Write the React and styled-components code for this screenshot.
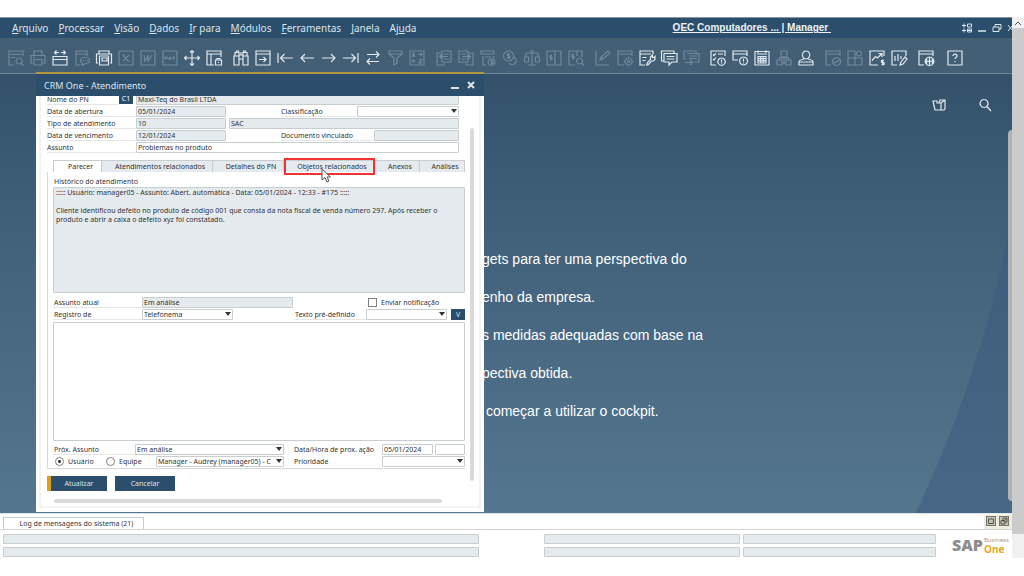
import React, { useState } from 'react';
import styled, { createGlobalStyle } from 'styled-components';

const MENUS = [
  ['', 'A', 'rquivo'],
  ['', 'P', 'rocessar'],
  ['', 'V', 'isão'],
  ['', 'D', 'ados'],
  ['', 'I', 'r para'],
  ['', 'M', 'ódulos'],
  ['', 'F', 'erramentas'],
  ['', 'J', 'anela'],
  ['Aj', 'u', 'da'],
];

const WIDGET_LINES = [
  'gets para ter uma perspectiva do',
  'enho da empresa.',
  's medidas adequadas com base na',
  'pectiva obtida.',
  '\u00a0começar a utilizar o cockpit.',
];

const HISTORY = `::::: Usuário: manager05 - Assunto: Abert. automática - Data: 05/01/2024 - 12:33 - #175 :::::

Cliente identificou defeito no produto de código 001 que consta da nota fiscal de venda número 297. Após receber o produto e abrir a caixa o defeito xyz foi constatado.`;

// 18 x 18 line drawings
const ICONS = {
  preview: 'M7 16H2V2h14v5M4 5.5h10M4 8.5h4M12 9a3 3 0 1 0 .1 0M14 14l2.5 2.5',
  print: 'M5 6V2h8v4M4 14H2V6.500h14V14h-2M5 10.500h8V16H5zM4 8.500h2',
  fax: 'M2 7.500h14V16H2zM2 10.500h14M4 3.500h4M10 3.500h4M5.500 1.500l-2 2 2 2M12.500 1.500l2 2-2 2',
  sms: 'M7 16H3V2h11v5M3 5h11M12 8.500c6 0 6 6 0 6l-3 2v-3c-3-2-1-5 3-5M10 11.500h1M12 11.500h1M14 11.500h1',
  copies: 'M4 5V2h10v3M3 14H1.500V5h15v9H15M4.500 16V7h9v9zM7 9h5v3H7z',
  excel: 'M2 2h14v14H2zM6 6l5 6M12 6l-6 6M5.500 6h2M11 12h2',
  word: 'M2 2h14v14H2zM5 6l1 6 3-5 0 5 4-6',
  pdf: 'M2 2h14v14H2zM4 10.500V8h2v1.500H4M8 8v2.500c2.500 0 2.500-2.500 0-2.500M12 10.500V8h2M12 9.300h1.500',
  move: 'M9 1.500v15M1.500 9h15M7 3.500l2-2 2 2M7 14.500l2 2 2-2M3.500 7l-2 2 2 2M14.500 7l2 2-2 2',
  layout: 'M9 16H2V2h14v6M2 5h14M6 5v11M10.500 11h6v5h-6zM12 11V9.500h3V11M13.500 13v1',
  find: 'M2 7h5v9H2zM11 7h5v9h-5zM3 7V3.500h4V7M11 7V3.500h4V7M7 6h4M7 10h4M4.500 3.500V2h2v1.500M11.500 3.500V2h2v1.500M9 6V3',
  goto: 'M2 2h14v14H2zM2 5h14M5 10.500h7M9.500 8l2.500 2.500L9.500 13',
  first: 'M2 4v10M17 9H4.500M8.500 5l-4 4 4 4',
  prev: 'M16 9H3M7 5L3 9l4 4',
  next: 'M2 9h13M11 5l4 4-4 4',
  last: 'M16 4v10M1 9h12.500M9.500 5l4 4-4 4',
  swap: 'M3 5.500h12M12 2.500l3 3-3 3M15 12.500H3M6 9.500l-3 3 3 3',
  filter: 'M3 2h13v3l-5 4v5l-3 2V9L3 5zM3 5h13',
  sort: 'M2 2h14v14H2zM4 8l1.500-4L7 8M4.500 7h2M10 5.500h4M12.500 4L14 5.500 12.500 7M8 12H4M5.500 10.500L4 12l1.500 1.500M11 10.500h3l-3 3.500h3',
  base: 'M6 4H2v12h7v-2M7 2h9v11H7zM9 5h5M9 10h5M13 7.500H4.500M6.500 5.500l-2 2 2 2',
  target: 'M12 4h4v12H9v-2M2 2h9v11H2zM4 5h5M4 10h5M5 7.500h8.500M11.500 5.500l2 2-2 2',
  profit: 'M7 16H4V7M2 2h13v3H2zM4 7v9M6 8h6M15 7v2M12.500 9.500a3.500 3.500 0 1 0 .1 0M14 11.500h-2v1.500h2v1.500h-2M13 10.500v5',
  coins: 'M7.500 2a5 5 0 1 0 .1 0M9 5H6.500v2H9v2H6M7.500 4v6M13 8a4 4 0 1 1-5 6',
  scale: 'M9 2v14M3 4h12M5 16h8M3 4v4M15 4v4M1.500 8h4v5h-4zM12.500 8h4v5h-4zM7 2h4',
  ledger: 'M2 2h14v14H2zM10 2v14M7 6.500H5v2h2v2H5M6 5.500v6',
  journal: 'M8 16H2V2h13v6M10 2v5M7 5.500H5v2h2v2H5M6 4.500v6M12.500 9a3 3 0 1 0 .1 0M14.500 14l2.500 2.500',
  edit: 'M2 2v14h13M6 11l1-3 7-6 2 2-7 6zM7 8l2 2',
  settings: 'M8 16H2V2h14v5M2 5h14M12.500 9a3.500 3.500 0 1 0 .1 0M12.500 11.500a1 1 0 1 0 .1 0M12.500 7.500V9M12.500 16v1.500M7.500 12.500H9M16 12.500h1.500',
  formset: 'M7 16H2V2h13v3M2 5h11M4.500 8.500h4M4.500 11.500h3M8.500 16l1-2.500 3-3V8l2-2v2.500h1.500l1-1v3l-1.500 1.500h-2L10 16z',
  chat: 'M4 12H1.500V2H14v2M4 4.500h13V13h-5l-3 3v-3H4zM6.500 7.500h8M6.500 10h8',
  reply: 'M4 10H2V2h12v2M5 4.500h12V13h-5M7 7h8M7 9.500h8M3 13.500h7M8 11l2.500 2.500L8 16',
  alert: 'M7 16H2V2h14v5M4 5.500l1 1 2-2.500M9 5h5M4 10l1 1 2-2.500M12.500 9a3.700 3.700 0 1 0 .1 0M12.500 10.500v3M12.500 14.500v.5',
  warning: 'M7 11H2V2h14v5M2 5h14M12.500 8a4 4 0 1 0 .1 0M12.500 9.500v3M12.500 13.500v1',
  calendar: 'M2 2.500h14V16H2zM4 5h10M5 1.500V4M13 1.500V4M5 7.500h8v6.500H5zM5 9.700h8M5 11.800h8M7.700 7.500V14M10.300 7.500V14',
  blocks: 'M6 2h6v6H6zM2 11h5v5H2zM11 11h5v5h-5zM4.500 11V9h9v2M9 8v6M7 14h4',
  user: 'M9 2a3.700 4 0 1 0 .1 0M7 9.500C7 11 2 10.500 2 12.500V16h14v-3.500c0-2-5-1.500-5-3M2 13h14',
  clock: 'M7 16H2V2h14v5M2 5h14M12.500 8.500a4 4 0 1 0 .1 0M10 14l5-3M12.500 12.500h2',
  widgets: 'M2 2h7v14H2zM2 9h14v7H9M13 2a2.500 2.500 0 1 0 .1 0',
  dashboard: 'M10 16H2V2h14v5M4 11.500l3.500-4 2 1.500 4-4M10.500 4.500H14V8M16 11.500h-2.500v2H16v2h-2.500M14.700 10.500v6',
  report: 'M7 16H2V2h14v5M5 7v5M8 5v7M11 7v3M10 16l1-3 4-5 2 2-4 5z',
  web: 'M7 16H2V2h14v5M2 5h14M12.500 8a4.300 4.300 0 1 0 .1 0M8.500 12.300h8M12.500 8v8.600M10 9.500c-1 2-1 4 0 6M15 9.500c1 2 1 4 0 6',
  help: 'M2 2h14v14H2zM7 7c0-2.500 4-2.500 4 0 0 1.500-2 1.500-2 3M9 12v1',
};

// a leading dash marks a disabled tool
const TOOLBAR = [
  ['-preview', '-print', 'fax', '-sms', 'copies', '-excel', '-word', '-pdf', 'move', 'layout'],
  ['find', 'goto', 'first', 'prev', 'next', 'last', 'swap', '-filter', '-sort'],
  ['-base', '-target', '-profit', '-coins', '-scale', '-ledger', '-journal'],
  ['-edit', '-settings', 'formset', 'chat', '-reply'],
  ['alert', 'warning', 'calendar', '-blocks', 'user'],
  ['-clock', '-widgets', 'dashboard', 'report'],
  ['web'],
  ['help'],
];

const TABS = [
  { name: 'Parecer', width: 49 },
  { name: 'Atendimentos relacionados', width: 111 },
  { name: 'Detalhes do PN', width: 71 },
  { name: 'Objetos relacionados', width: 91, marked: true },
  { name: 'Anexos', width: 45 },
  { name: 'Análises', width: 45 },
];

const Icon = ({ name }) => (
  <IconSvg viewBox="0 0 18 18" aria-hidden="true">
    <path d={ICONS[name]} />
  </IconSvg>
);

const Dropdown = ({ id, label, value = '', ...rest }) => (
  <SelectWrapper {...rest}>
    <Select id={id} aria-label={label} defaultValue={value}>
      <option value={value}>{value}</option>
    </Select>
    <svg viewBox="0 0 6 4" aria-hidden="true">
      <path d="M0 0h6L3 4z" />
    </svg>
  </SelectWrapper>
);

const MenuBar = () => (
  <MenuBarWrapper>
    <MenuList>
      {MENUS.map(([before, key, after]) => (
        <MenuButton key={key}>
          {before}
          <u>{key}</u>
          {after}
        </MenuButton>
      ))}
    </MenuList>
    <Company href="#empresa">OEC Computadores ... | Manager&nbsp;</Company>
    <AppControls>
      <AppControl aria-label="Ajustar">
        <svg viewBox="0 0 10 10">
          <path d="M0 2.500h4M2 .5v4M5.500 1h4v3h-4zM0 7.500h4M2 5.500v4M5.500 6h4v3h-4zM5.500 7.500h4" />
        </svg>
      </AppControl>
      <AppControl aria-label="Minimizar">
        <svg viewBox="0 0 10 10">
          <path d="M1 8h8" strokeWidth="1.500" />
        </svg>
      </AppControl>
      <AppControl aria-label="Restaurar">
        <svg viewBox="0 0 10 10">
          <path d="M1 4h6v4.500H1zM3 4V1.500h6V6H7" />
        </svg>
      </AppControl>
      <AppControl aria-label="Fechar">
        <svg viewBox="0 0 10 10">
          <path d="M1 2l5 6M6 2L1 8" />
        </svg>
      </AppControl>
    </AppControls>
  </MenuBarWrapper>
);

const Toolbar = () => (
  <ToolbarWrapper>
    {TOOLBAR.map((group) => (
      <ToolGroup key={group[0]}>
        {group.map((item) => (
          <ToolButton
            key={item}
            disabled={item.startsWith('-')}
            aria-label={item.replace('-', '')}
          >
            <Icon name={item.replace('-', '')} />
          </ToolButton>
        ))}
      </ToolGroup>
    ))}
  </ToolbarWrapper>
);

const HeaderFields = () => (
  <HeaderGrid>
    <Row>
      <FieldLabel htmlFor="pn">Nome do PN</FieldLabel>
      <CodeTag>C1</CodeTag>
      <Field id="pn" readOnly defaultValue="Maxi-Teq do Brasil LTDA" $grow />
    </Row>
    <Row>
      <FieldLabel htmlFor="abertura" $wide>Data de abertura</FieldLabel>
      <Field id="abertura" readOnly defaultValue="05/01/2024" $width={90} />
      <Spacer />
      <FieldLabel htmlFor="classificacao" $width={76}>Classificação</FieldLabel>
      <Dropdown id="classificacao" $width={102} />
    </Row>
    <Row>
      <FieldLabel htmlFor="tipo" $wide>Tipo de atendimento</FieldLabel>
      <Field id="tipo" readOnly defaultValue="10" $width={90} />
      <Field aria-label="Descrição do tipo" readOnly defaultValue="SAC" $grow $gap={3} />
    </Row>
    <Row>
      <FieldLabel htmlFor="vencimento" $wide>Data de vencimento</FieldLabel>
      <Field id="vencimento" readOnly defaultValue="12/01/2024" $width={90} />
      <Spacer />
      <FieldLabel htmlFor="documento" $width={93}>Documento vinculado</FieldLabel>
      <Field id="documento" readOnly $width={85} />
    </Row>
    <Row>
      <FieldLabel htmlFor="assunto" $wide>Assunto</FieldLabel>
      <Field id="assunto" defaultValue="Problemas no produto" $grow />
    </Row>
  </HeaderGrid>
);

const AttendanceWindow = () => {
  const [tab, setTab] = useState('Parecer');
  const [owner, setOwner] = useState('usuario');

  return (
    <Window>
      <TitleBar>
        <WindowTitle>CRM One - Atendimento</WindowTitle>
        <AppControl aria-label="Minimizar janela">
          <svg viewBox="0 0 10 10">
            <path d="M1 8h8" strokeWidth="2" />
          </svg>
        </AppControl>
        <AppControl aria-label="Fechar janela">
          <svg viewBox="0 0 10 10">
            <path d="M2 2l6 6M8 2L2 8" strokeWidth="2" />
          </svg>
        </AppControl>
      </TitleBar>
      <WindowBody>
        <Form onSubmit={(e) => e.preventDefault()}>
          <HeaderFields />
          <TabList role="tablist">
            {TABS.map(({ name, width, marked }) => (
              <Tab
                key={name}
                type="button"
                role="tab"
                aria-selected={tab === name}
                $active={tab === name}
                $width={width}
                onClick={() => setTab(name)}
              >
                {name}
                {marked && (
                  <Marker>
                    <Cursor viewBox="0 0 10 15" aria-hidden="true">
                      <path d="M1 1v11l3-2.500 2 4.500 2-1-2-4h3.500z" />
                    </Cursor>
                  </Marker>
                )}
              </Tab>
            ))}
          </TabList>
          <TabPanel role="tabpanel">
            <BlockLabel htmlFor="historico">Histórico do atendimento</BlockLabel>
            <TextArea id="historico" readOnly defaultValue={HISTORY} $grow={104} />
            <PanelRow $top={4}>
              <FieldLabel htmlFor="atual" $width={89}>Assunto atual</FieldLabel>
              <Field id="atual" readOnly defaultValue="Em análise" $width={151} />
              <Spacer />
              <CheckLabel $width={98}>
                <CheckBox type="checkbox" />
                Enviar notificação
              </CheckLabel>
            </PanelRow>
            <PanelRow>
              <FieldLabel htmlFor="registro" $width={89}>Registro de</FieldLabel>
              <Dropdown id="registro" value="Telefonema" $width={91} />
              <Spacer />
              <FieldLabel htmlFor="texto" $width={72}>Texto pré-definido</FieldLabel>
              <Dropdown id="texto" $width={81} />
              <ApplyButton type="button">V</ApplyButton>
            </PanelRow>
            <TextArea aria-label="Parecer" $grow={118} $top={1} />
            <PanelRow $top={2}>
              <FieldLabel htmlFor="proximo" $width={82}>Próx. Assunto</FieldLabel>
              <Dropdown id="proximo" value="Em análise" $grow />
              <RightLabel htmlFor="dataprox">Data/Hora de prox. ação</RightLabel>
              <Field id="dataprox" defaultValue="05/01/2024" $width={51} />
              <Field aria-label="Hora" $width={30} $gap={2} />
            </PanelRow>
            <PanelRow>
              <CheckLabel $width={51} $inset>
                <Radio
                  name="owner"
                  checked={owner === 'usuario'}
                  onChange={() => setOwner('usuario')}
                />
                Usuário
              </CheckLabel>
              <CheckLabel $width={51}>
                <Radio
                  name="owner"
                  checked={owner === 'equipe'}
                  onChange={() => setOwner('equipe')}
                />
                Equipe
              </CheckLabel>
              <Dropdown label="Responsável" value="Manager - Audrey (manager05) - C" $grow />
              <RightLabel htmlFor="prioridade">Prioridade</RightLabel>
              <Dropdown id="prioridade" $width={83} />
            </PanelRow>
          </TabPanel>
          <Actions>
            <ActionButton $primary>Atualizar</ActionButton>
            <ActionButton type="button">Cancelar</ActionButton>
          </Actions>
          <HorizontalThumb />
        </Form>
        <VerticalThumb />
      </WindowBody>
    </Window>
  );
};

const MessageLog = () => (
  <LogWrapper>
    <LogHeader>
      <LogTab>Log de mensagens do sistema (21)</LogTab>
      <LogControls>
        <LogButton aria-label="Maximizar log">
          <svg viewBox="0 0 8 8">
            <path d="M1.500 2h5v4.500h-5z" />
          </svg>
        </LogButton>
        <LogButton aria-label="Destacar log">
          <svg viewBox="0 0 8 8">
            <path d="M1 3.500h4V7H1zM3 3V1h4v4H5M3 5l4-4" />
          </svg>
        </LogButton>
      </LogControls>
    </LogHeader>
    <LogBody>
      <StatusGrid>
        {[1, 2].map((line) => (
          <React.Fragment key={line}>
            <StatusCell />
            <span />
            <StatusCell />
            <StatusCell />
          </React.Fragment>
        ))}
      </StatusGrid>
      <Logo>
        <LogoSap>SAP</LogoSap>
        <LogoProduct>
          <LogoSmall>Business</LogoSmall>
          <LogoOne>One</LogoOne>
        </LogoProduct>
      </Logo>
    </LogBody>
  </LogWrapper>
);

const App = () => (
  <Page>
    <GlobalStyle />
    <Main>
      <MenuBar />
      <Toolbar />
      <Workspace>
        <Backdrop viewBox="0 0 96 300" preserveAspectRatio="none" aria-hidden="true">
          <path d="M0 300Q70 150 96 0V300z" />
        </Backdrop>
        <CockpitTools>
          <CockpitButton aria-label="Abrir cockpit">
            <svg viewBox="0 0 14 14">
              <path d="M1 3h4v2h4v7H3zM1 3l2 9M9 12h3l1-1V2H8L7 5M9 5l4-3" />
            </svg>
          </CockpitButton>
          <CockpitButton aria-label="Pesquisar">
            <svg viewBox="0 0 14 14">
              <path d="M6 1.500a4 4 0 1 0 .1 0M9 8.500L13 13" />
            </svg>
          </CockpitButton>
        </CockpitTools>
        <WidgetHint>
          {WIDGET_LINES.map((line) => (
            <p key={line}>{line}</p>
          ))}
        </WidgetHint>
        <WorkspaceThumb />
        <AttendanceWindow />
      </Workspace>
      <MessageLog />
    </Main>
    <PageScroll>
      <ScrollUp aria-label="Rolar para cima">
        <svg viewBox="0 0 8 6">
          <path d="M1 5l3-3 3 3" />
        </svg>
      </ScrollUp>
      <PageThumb />
    </PageScroll>
  </Page>
);

export default App;

const GlobalStyle = createGlobalStyle`
  * {
    box-sizing: border-box;
  }
  body {
    margin: 0;
    background: #ffffff;
    font-family: "Noto Sans", "Open Sans", sans-serif;
    font-size: 7px;
    color: #333333;
  }
  button, input, select, textarea {
    margin: 0;
    padding: 0;
    border: none;
    font: inherit;
    color: inherit;
  }
  button {
    background: none;
  }
  p {
    margin: 0;
  }
  svg {
    display: block;
  }
`;

const Page = styled.div`
  display: flex;
  height: 100vh;
  min-height: 480px;
  padding: 17px 0 18px;
`;

const Main = styled.div`
  display: flex;
  flex-direction: column;
  flex: 1;
  min-width: 0;
`;

const MenuBarWrapper = styled.header`
  display: flex;
  align-items: center;
  height: 21px;
  padding-left: 12px;
  border-top: 1px solid #8296a6;
  background: #2b4e6c;
  color: #dde5eb;
  font-size: 10px;
`;

const MenuList = styled.nav`
  display: flex;
  flex: 1;
  gap: 10px;
`;

const MenuButton = styled.button`
  line-height: 16px;
  white-space: nowrap;
`;

const Company = styled.a`
  margin-right: 131px;
  color: #eef2f5;
  font-family: "Liberation Sans", Arial, sans-serif;
  font-weight: bold;
  line-height: 18px;
  white-space: nowrap;
`;

const AppControls = styled.div`
  display: flex;
  gap: 5px;
  width: 50px;
  overflow: hidden;
`;

const AppControl = styled.button`
  flex: none;
  width: 10px;
  height: 10px;

  svg {
    width: 10px;
    height: 10px;
    fill: none;
    stroke: #dde5eb;
  }
`;

const ToolbarWrapper = styled.div`
  display: flex;
  align-items: center;
  gap: 9px;
  height: 36px;
  padding: 4px 7px 0;
  border-bottom: 1px solid #71899b;
  background: #425f75;
`;

const ToolGroup = styled.div`
  display: flex;
  gap: 4px;

  &:last-child {
    margin-left: 2px;
  }
`;

const ToolButton = styled.button`
  width: 18px;
  height: 18px;
  opacity: ${(props) => (props.disabled ? 0.3 : 1)};
`;

const IconSvg = styled.svg`
  width: 18px;
  height: 18px;
  fill: none;
  stroke: #e1e9ee;
  stroke-width: 1.2;
`;

const Workspace = styled.main`
  position: relative;
  display: flex;
  flex-direction: column;
  flex: 1;
  min-height: 0;
  background: linear-gradient(#33516a, #44647e 45%, #55768f);
`;

const Backdrop = styled.svg`
  position: absolute;
  right: 0;
  bottom: 0;
  width: 96px;
  height: 300px;
  fill: #3c5a80;
  opacity: 0.5;
`;

const CockpitTools = styled.div`
  display: flex;
  justify-content: flex-end;
  gap: 32px;
  padding: 24px 20px 0 0;
`;

const CockpitButton = styled.button`
  width: 14px;
  height: 14px;

  svg {
    fill: none;
    stroke: #e1e9ee;
    stroke-width: 1.2;
  }
`;

const WidgetHint = styled.div`
  display: flex;
  flex-direction: column;
  gap: 18px;
  padding: 137px 0 0 482px;
  color: #ffffff;
  font-family: "Liberation Sans", Arial, sans-serif;
  font-size: 14px;
  line-height: 20px;
`;

const WorkspaceThumb = styled.div`
  position: absolute;
  top: 56px;
  right: 0;
  bottom: 12px;
  width: 4px;
  border-radius: 4px 0 0 4px;
  background: #b0b3b5;
`;

const Window = styled.section`
  position: absolute;
  top: -2px;
  bottom: 1px;
  left: 36px;
  display: flex;
  flex-direction: column;
  width: 448px;
  border-top: 2px solid #b3953f;
  background: #ffffff;
`;

const TitleBar = styled.div`
  display: flex;
  flex: none;
  align-items: center;
  gap: 6px;
  height: 22px;
  padding: 0 8px;
  background: #2b4e6c;
`;

const WindowTitle = styled.h1`
  flex: 1;
  margin: 0;
  color: #dde5eb;
  font-size: 9px;
  font-weight: normal;
`;

const WindowBody = styled.div`
  display: flex;
  flex: 1;
  min-height: 0;
  margin: 0 3px 4px;
  border: 2px solid #f3f3f3;
  border-top: none;
  overflow: hidden;
`;

/* the form is scrolled a little under the title bar */
const Form = styled.form`
  display: flex;
  flex-direction: column;
  flex: 1;
  min-width: 0;
  margin-top: -3px;
  padding: 0 5px 3px 6px;
`;

const HeaderGrid = styled.div`
  margin-right: 6px;
`;

const Row = styled.div`
  display: flex;
  flex: none;
  align-items: center;
  height: 12px;
  margin-top: ${(props) => props.$top || 0}px;
`;

const Spacer = styled.span`
  flex: 1;
`;

const FieldLabel = styled.label`
  flex: none;
  width: ${(props) => (props.$wide ? 89 : props.$width || 72)}px;
  height: 11px;
  border-bottom: 1px solid #e6e6e6;
  line-height: 11px;
  white-space: nowrap;
`;

const PanelRow = styled(Row)`
  label {
    padding-left: 1px;
  }
`;

const RightLabel = styled(FieldLabel)`
  width: 89px;
  margin-left: 9px;
  border-bottom: none;
`;

const CodeTag = styled.span`
  width: 14px;
  height: 10px;
  margin-right: 3px;
  background: #2b4e6c;
  color: #ffffff;
  line-height: 10px;
  text-align: center;
`;

const Field = styled.input`
  flex: ${(props) => (props.$grow ? '1' : 'none')};
  width: ${(props) => props.$width || 0}px;
  min-width: 0;
  height: 11px;
  margin-left: ${(props) => props.$gap || 0}px;
  padding: 0 1px;
  border: 1px solid #c8cdd0;
  border-radius: 1px;
  background: ${(props) => (props.readOnly ? '#e4eaee' : '#ffffff')};
  line-height: 9px;
`;

const SelectWrapper = styled.span`
  position: relative;
  flex: ${(props) => (props.$grow ? '1' : 'none')};
  width: ${(props) => props.$width || 0}px;
  height: 11px;

  svg {
    position: absolute;
    top: 3px;
    right: 2px;
    width: 6px;
    height: 4px;
    fill: #333333;
  }
`;

const Select = styled.select`
  display: block;
  width: 100%;
  height: 11px;
  padding: 0 8px 0 1px;
  border: 1px solid #c8cdd0;
  border-radius: 1px;
  background: #ffffff;
  line-height: 9px;
  appearance: none;
`;

const TabList = styled.div`
  display: flex;
  flex: none;
  height: 12px;
  margin: 7px 0 0 6px;
`;

const Tab = styled.button`
  position: relative;
  flex: none;
  width: ${(props) => props.$width}px;
  padding-left: 6px;
  border: 1px solid #c8cdd0;
  border-width: 1px 1px 0 ${(props) => (props.$active ? '1px' : '0')};
  background: ${(props) => (props.$active ? '#ffffff' : '#e4eaee')};
  line-height: 11px;
  white-space: nowrap;
`;

const Marker = styled.span`
  position: absolute;
  inset: -3px -1px -3px 0;
  border: 2px solid #f23333;
`;

const Cursor = styled.svg`
  position: absolute;
  top: 8px;
  left: 35px;
  width: 10px;
  height: 15px;
  fill: #ffffff;
  stroke: #555555;
`;

const TabPanel = styled.div`
  display: flex;
  flex-direction: column;
  flex: 1;
  min-height: 0;
  padding: 4px 0 1px 5px;
  border: 1px solid #d6d9db;
  border-width: 0 0 1px 1px;
`;

const BlockLabel = styled.label`
  padding-left: 1px;
  line-height: 11px;
`;

const TextArea = styled.textarea`
  flex: ${(props) => props.$grow} 1 0;
  min-height: 0;
  margin-top: ${(props) => props.$top || 0}px;
  padding: 0 12px 0 2px;
  border: 1px solid #c8cdd0;
  border-radius: 1px;
  background: ${(props) => (props.readOnly ? '#e4eaee' : '#ffffff')};
  line-height: 9px;
  resize: none;
  overflow: hidden;
`;

const CheckLabel = styled.label`
  display: flex;
  flex: none;
  align-items: center;
  gap: 4px;
  width: ${(props) => props.$width}px;
  margin-left: ${(props) => (props.$inset ? 1 : 0)}px;
  white-space: nowrap;
`;

const CheckBox = styled.input`
  width: 9px;
  height: 9px;
  border: 1px solid #808080;
  background: #ffffff;
  appearance: none;
`;

const Radio = styled.input.attrs({ type: 'radio' })`
  width: 9px;
  height: 9px;
  border: 1px solid #808080;
  border-radius: 50%;
  background: #ffffff;
  appearance: none;

  &:checked {
    background: radial-gradient(#333333 0 1px, #ffffff 2px);
  }
`;

const ApplyButton = styled.button`
  width: 14px;
  height: 11px;
  margin-left: 4px;
  background: #2b4e6c;
  color: #dde5eb;
  line-height: 11px;
`;

const Actions = styled.div`
  display: flex;
  gap: 8px;
  margin: 7px 0 8px;
`;

const ActionButton = styled.button`
  width: 60px;
  height: 15px;
  border-left: ${(props) => (props.$primary ? '4px solid #d9a215' : 'none')};
  background: #2b4e6c;
  color: #dde5eb;
`;

const HorizontalThumb = styled.div`
  flex: none;
  height: 4px;
  margin: 0 23px 0 7px;
  border-radius: 2px;
  background: #dadada;
`;

const VerticalThumb = styled.div`
  width: 4px;
  margin: 32px 5px 25px 0;
  border-radius: 2px;
  background: #dadada;
`;

const LogWrapper = styled.footer`
  border-top: 1px solid #dfe5e9;
  background: #ffffff;
`;

const LogHeader = styled.div`
  display: flex;
  justify-content: space-between;
  align-items: flex-end;
  height: 16px;
  padding-left: 3px;
  border-bottom: 1px solid #d4d4d4;
`;

const LogTab = styled.button`
  width: 141px;
  height: 12px;
  padding-left: 6px;
  border: 1px solid #c9c9c9;
  border-bottom: none;
  line-height: 11px;
`;

const LogControls = styled.div`
  display: flex;
  gap: 3px;
  padding: 1px 3px 3px 2px;
  background: #efebdd;
`;

const LogButton = styled.button`
  width: 10px;
  height: 10px;
  border: 1px solid #77776f;
  background: #c4c2b5;

  svg {
    fill: none;
    stroke: #55554f;
  }
`;

const LogBody = styled.div`
  display: flex;
  align-items: flex-end;
  height: 28px;
`;

const StatusGrid = styled.div`
  display: grid;
  grid-template-columns: 476fr 59px 196fr 193fr;
  gap: 3px;
  flex: 1;
  margin: 0 0 1px 3px;
`;

const StatusCell = styled.div`
  height: 10px;
  border: 1px solid #c8cdd0;
  border-radius: 1px;
  background: #e4eaee;
`;

const Logo = styled.div`
  display: flex;
  align-items: center;
  gap: 1px;
  width: 60px;
  margin: 0 0 4px 16px;
`;

const LogoSap = styled.span`
  color: #8d8d8d;
  font-family: "Open Sans", sans-serif;
  font-size: 16px;
  font-weight: 800;
  line-height: 18px;
`;

const LogoProduct = styled.span`
  display: flex;
  flex-direction: column;
`;

const LogoSmall = styled.span`
  color: #9b9b9b;
  font-size: 6px;
  line-height: 7px;
`;

const LogoOne = styled.span`
  color: #e8a823;
  font-size: 10px;
  font-weight: bold;
  line-height: 10px;
`;

const PageScroll = styled.div`
  width: 12px;
  background: #f0f0f0;
`;

const ScrollUp = styled.button`
  display: flex;
  justify-content: center;
  align-items: center;
  width: 12px;
  height: 11px;

  svg {
    width: 8px;
    height: 6px;
    fill: none;
    stroke: #555555;
  }
`;

const PageThumb = styled.div`
  height: calc(100% - 35px);
  background: #cbcbcb;
`;
